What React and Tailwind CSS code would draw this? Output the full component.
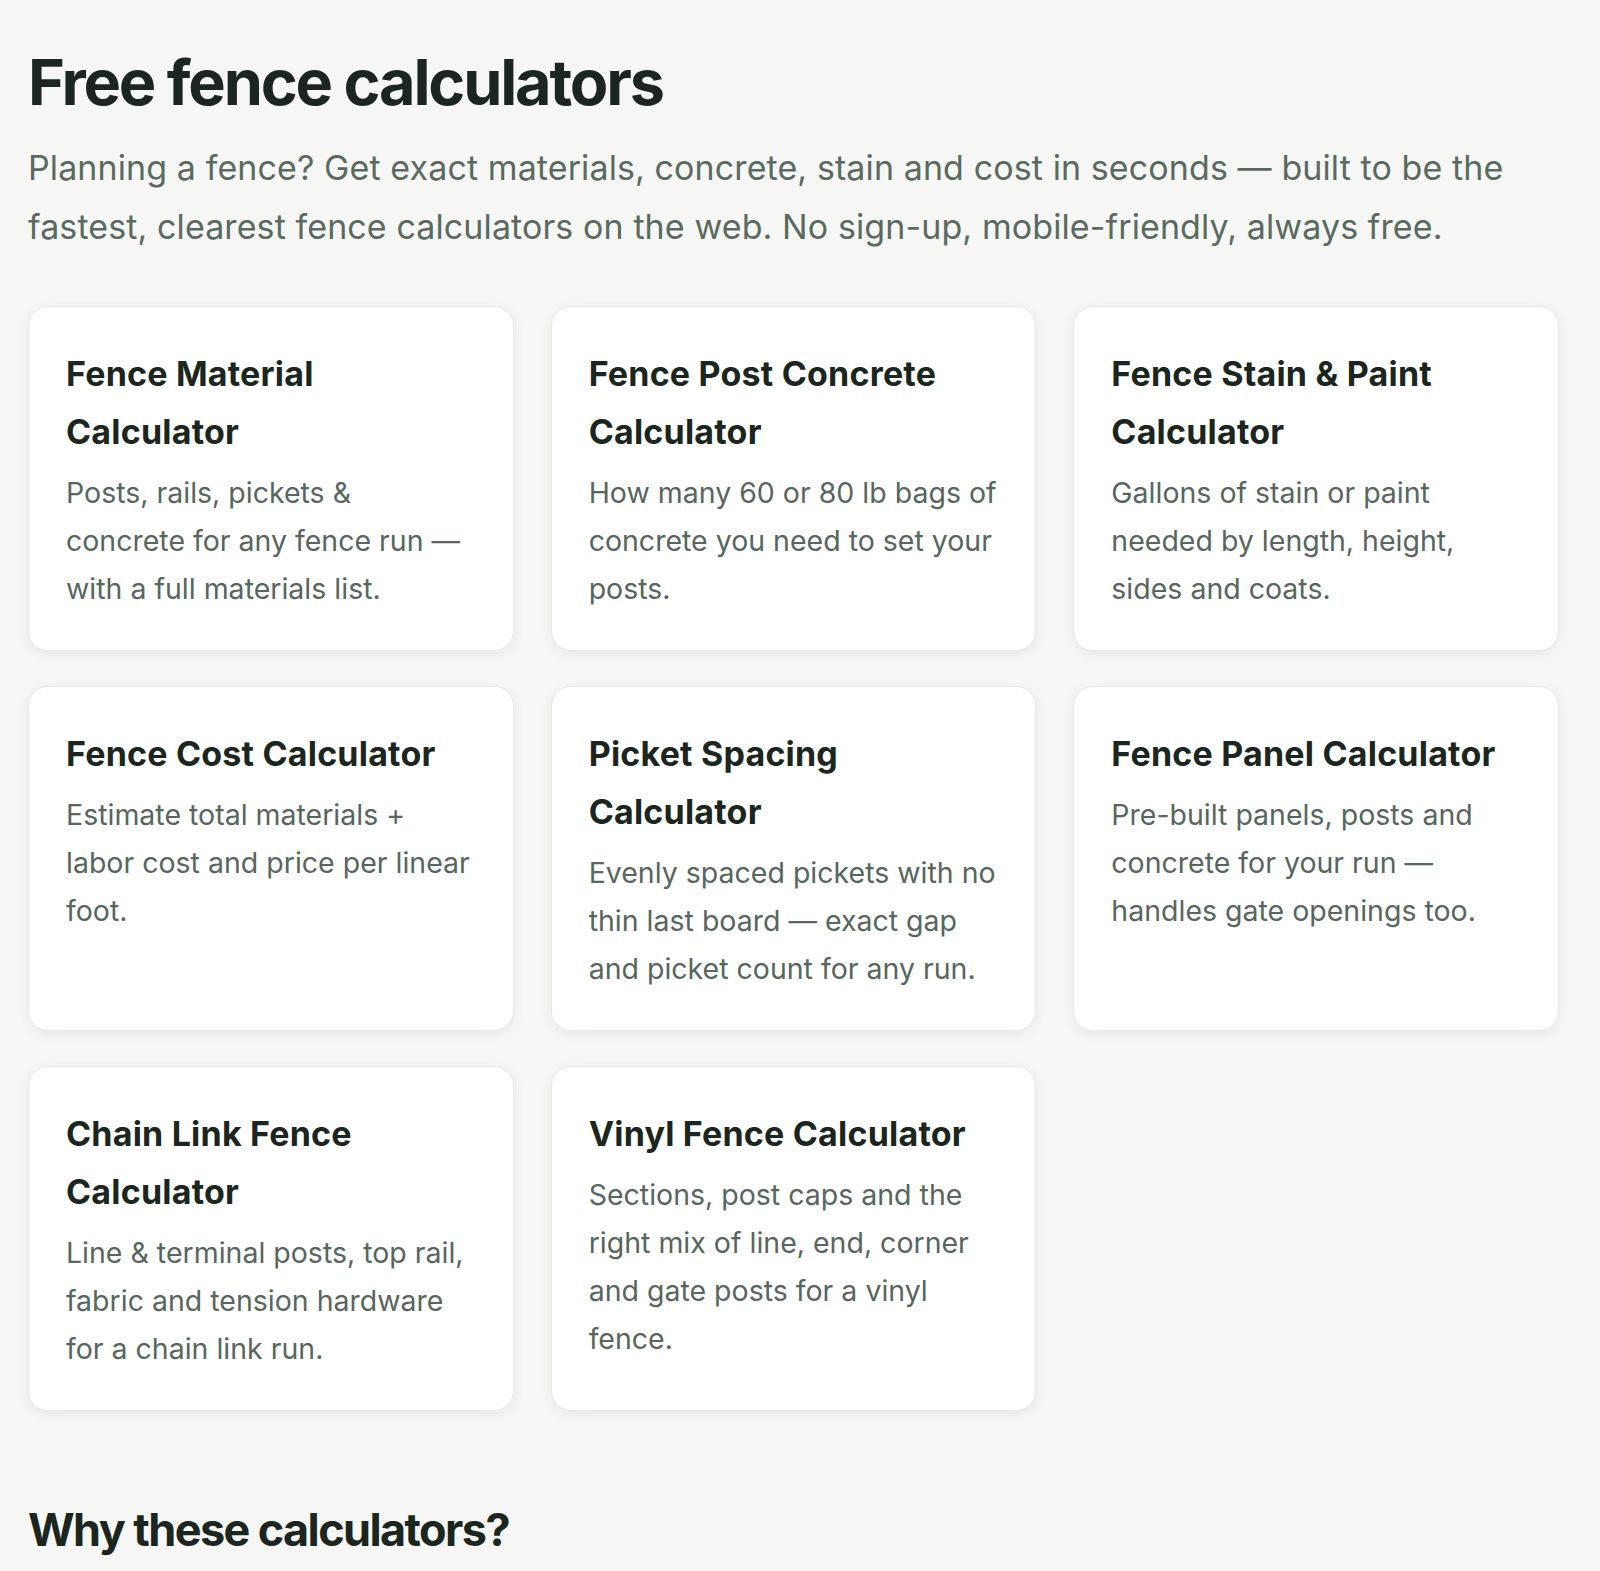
import React from 'react';

const CALCULATORS = [
  {
    title: 'Fence Material Calculator',
    desc: 'Posts, rails, pickets & concrete for any fence run — with a full materials list.',
  },
  {
    title: 'Fence Post Concrete Calculator',
    desc: 'How many 60 or 80 lb bags of concrete you need to set your posts.',
  },
  {
    title: 'Fence Stain & Paint Calculator',
    desc: 'Gallons of stain or paint needed by length, height, sides and coats.',
  },
  {
    title: 'Fence Cost Calculator',
    desc: 'Estimate total materials + labor cost and price per linear foot.',
  },
  {
    title: 'Picket Spacing Calculator',
    desc: 'Evenly spaced pickets with no thin last board — exact gap and picket count for any run.',
  },
  {
    title: 'Fence Panel Calculator',
    desc: 'Pre-built panels, posts and concrete for your run — handles gate openings too.',
  },
  {
    title: 'Chain Link Fence Calculator',
    desc: 'Line & terminal posts, top rail, fabric and tension hardware for a chain link run.',
  },
  {
    title: 'Vinyl Fence Calculator',
    desc: 'Sections, post caps and the right mix of line, end, corner and gate posts for a vinyl fence.',
  },
];

const CalcCard = ({ title, desc }) => (
  <a
    href="#"
    className="block bg-white rounded-[20px] border border-[#e6e9e6] shadow-[0_3px_12px_rgba(20,40,30,0.07)] pt-[38px] pb-[37px] pl-[37px] pr-[38px]"
  >
    <h3 className="text-[34px] leading-[58px] font-bold text-[#1b2620] tracking-[0.2px]">{title}</h3>
    <p className="mt-[8px] text-[28.5px] leading-[48px] text-[#57665e]">{desc}</p>
  </a>
);

export default function App() {
  return (
    <div
      className="min-h-screen bg-[#f6f7f5] pl-[28px] pt-[42px] pb-[40px]"
      style={{ fontFamily: 'Inter, "Noto Sans", sans-serif' }}
    >
      <div className="w-[1531px]">
        <h1 className="text-[63px] leading-[80px] font-bold text-[#1b2620] tracking-[-2.2px]">
          Free fence calculators
        </h1>
        <p className="mt-[16px] text-[34px] leading-[59px] text-[#5a6a61] tracking-[0.1px]">
          Planning a fence? Get exact materials, concrete, stain and cost in seconds — built to be the
          fastest, clearest fence calculators on the web. No sign-up, mobile-friendly, always free.
        </p>

        <div className="mt-[50px] grid grid-cols-3 gap-x-[37px] gap-y-[35px]">
          {CALCULATORS.map((c) => (
            <CalcCard key={c.title} title={c.title} desc={c.desc} />
          ))}
        </div>

        <h2 className="mt-[89px] text-[45px] leading-[60px] font-bold text-[#1b2620] tracking-[-1.6px]">
          Why these calculators?
        </h2>
      </div>
    </div>
  );
}
